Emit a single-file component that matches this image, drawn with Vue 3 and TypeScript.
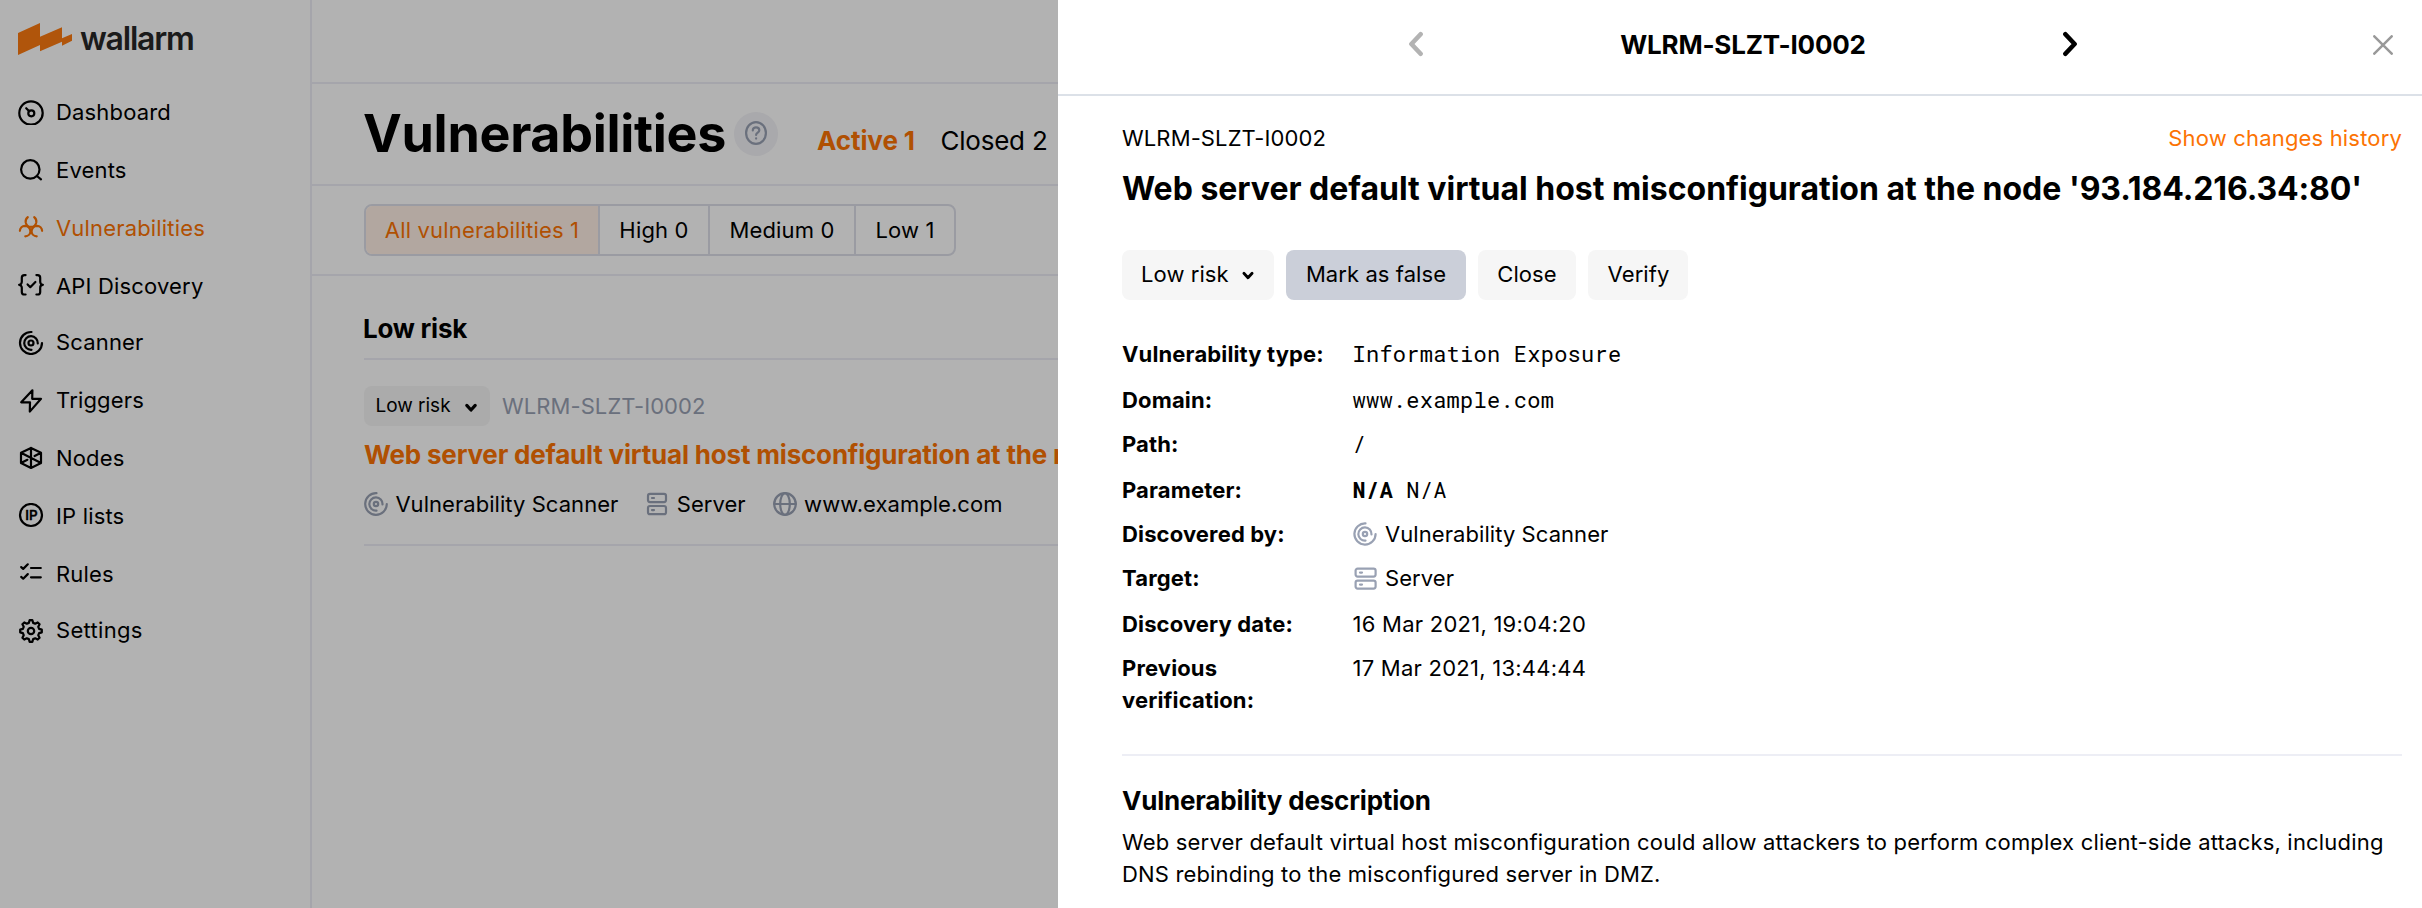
<script setup lang="ts">
interface NavItem {
  id: string
  label: string
  active?: boolean
}

interface Detail {
  label: string
  value: string
  kind: 'mono' | 'text' | 'param' | 'scanner' | 'server'
}

const nav: NavItem[] = [
  { id: 'dashboard', label: 'Dashboard' },
  { id: 'events', label: 'Events' },
  { id: 'vulnerabilities', label: 'Vulnerabilities', active: true },
  { id: 'api', label: 'API Discovery' },
  { id: 'scanner', label: 'Scanner' },
  { id: 'triggers', label: 'Triggers' },
  { id: 'nodes', label: 'Nodes' },
  { id: 'ip', label: 'IP lists' },
  { id: 'rules', label: 'Rules' },
  { id: 'settings', label: 'Settings' },
]

const filters = ['All vulnerabilities 1', 'High 0', 'Medium 0', 'Low 1']
const vulnId = 'WLRM-SLZT-I0002'
const vulnName = 'Web server default virtual host misconfiguration at the node'
const vulnHost = "'93.184.216.34:80'"

const details: Detail[] = [
  { label: 'Vulnerability type:', value: 'Information Exposure', kind: 'mono' },
  { label: 'Domain:', value: 'www.example.com', kind: 'mono' },
  { label: 'Path:', value: '/', kind: 'mono' },
  { label: 'Parameter:', value: 'N/A', kind: 'param' },
  { label: 'Discovered by:', value: 'Vulnerability Scanner', kind: 'scanner' },
  { label: 'Target:', value: 'Server', kind: 'server' },
  { label: 'Discovery date:', value: '16 Mar 2021, 19:04:20', kind: 'text' },
  { label: 'Previous verification:', value: '17 Mar 2021, 13:44:44', kind: 'text' },
]

// Outline of an eight-toothed gear centred on (cx, cy).
function gearPath(cx: number, cy: number): string {
  const pts: string[] = []
  for (let k = 0; k < 8; k++) {
    for (const [offset, radius] of [[-15, 8.4], [-7, 10.9], [7, 10.9], [15, 8.4]]) {
      const a = ((k * 45 + offset) * Math.PI) / 180
      pts.push(`${(cx + radius * Math.sin(a)).toFixed(2)} ${(cy - radius * Math.cos(a)).toFixed(2)}`)
    }
  }
  return `M${pts.join('L')}Z`
}
const gear = gearPath(13, 14)
</script>

<template>
  <div class="app">
    <aside class="sidebar">
      <div class="logo">
        <svg class="logo-mark" width="54" height="32" viewBox="0 0 54 32">
          <path d="M0 10L22 0V13.7L44 4.3V15.3L54 11V17.7L44 22.7V18.7L22 28.3V22L0 32Z" fill="#fc7a10" />
        </svg>
        <span class="logo-text">wallarm</span>
      </div>
      <nav class="nav">
        <a v-for="item in nav" :key="item.id" class="nav-item" :class="[item.id, { active: item.active }]">
          <svg class="nav-icon" width="26" height="26" viewBox="0 0 26 26">
            <template v-if="item.id === 'dashboard'">
              <circle cx="13" cy="14" r="11.7" />
              <circle cx="13.3" cy="14.3" r="3" />
              <path d="M8.2 9.2L11.2 12.2" />
            </template>
            <template v-else-if="item.id === 'events'">
              <circle cx="12.3" cy="12.4" r="9.2" />
              <path d="M18.9 19L23 22.4" />
            </template>
            <template v-else-if="item.id === 'vulnerabilities'">
              <path d="M9.8 2.1C7.9 3.7 7.4 5.4 7.7 7.4C8.2 10 10.4 11.9 13 11.9C15.6 11.9 17.8 10 18.3 7.4C18.6 5.4 18.1 3.7 16.2 2.1" />
              <path d="M1.9 15.8A5.3 5.3 0 0 1 7 10.8A5.4 5.4 0 0 1 12.4 16.2A5.2 5.2 0 0 1 7.3 21.3" />
              <path d="M24.1 15.8A5.3 5.3 0 0 0 19 10.8A5.4 5.4 0 0 0 13.6 16.2A5.2 5.2 0 0 0 18.7 21.3" />
            </template>
            <template v-else-if="item.id === 'api'">
              <path d="M7.6 2.1H6.4A2.6 2.6 0 0 0 3.8 4.7V8.8C3.8 10.6 2.6 11.8 1.1 11.8C2.6 11.8 3.8 13 3.8 14.8V18.9A2.6 2.6 0 0 0 6.4 21.5H7.6" />
              <path d="M18.4 2.1H19.6A2.6 2.6 0 0 1 22.2 4.7V8.8C22.2 10.6 23.4 11.8 24.9 11.8C23.4 11.8 22.2 13 22.2 14.8V18.9A2.6 2.6 0 0 1 19.6 21.5H18.4" />
              <path d="M9.6 11.4L12.3 14.2L17.4 9" />
            </template>
            <template v-else-if="item.id === 'scanner'">
              <path d="M13.5 3A11 11 0 1 0 24 14" />
              <path d="M19.8 14.5A6.8 6.8 0 1 0 13.5 20.8" />
              <circle cx="13" cy="14" r="2.5" />
            </template>
            <template v-else-if="item.id === 'triggers'">
              <path d="M14.4 3.3L3.2 15.3H12L11.8 24.6L23 11.8H14.2Z" />
            </template>
            <template v-else-if="item.id === 'nodes'">
              <path d="M13 2.9L23 7.8V18L13 22.9L3 18V7.8ZM13 2.9V22.9M3 7.8L23 18M23 7.8L16.6 11M9.4 14.8L3 18" />
            </template>
            <template v-else-if="item.id === 'ip'">
              <circle cx="13" cy="12" r="11" />
              <text class="ip-text" x="7.2" y="16.9">IP</text>
            </template>
            <template v-else-if="item.id === 'rules'">
              <path d="M3.2 6.1L5.2 7.9L9.8 3.3M3.2 15.9L5.2 17.7L9.8 13.1M13 7H22.8M13 16.3H22.8" />
            </template>
            <template v-else>
              <path :d="gear" />
              <circle cx="13" cy="14" r="3.2" />
            </template>
          </svg>
          <span>{{ item.label }}</span>
        </a>
      </nav>
    </aside>

    <main class="main">
      <div class="topbar"></div>
      <header class="title-bar">
        <h1 class="title">Vulnerabilities</h1>
        <span class="help">
          <svg width="22" height="24" viewBox="0 0 22 24">
            <ellipse cx="11" cy="12" rx="9.9" ry="10.9" />
            <path d="M7.8 9.4C7.8 7.4 9.2 6.3 11 6.3C12.9 6.3 14.3 7.5 14.3 9.2C14.3 11.6 11.1 11.6 11.1 14" />
            <path d="M11.1 17.3V17.6" />
          </svg>
        </span>
        <a class="state active">Active 1</a>
        <a class="state closed">Closed 2</a>
      </header>
      <div class="filter-bar">
        <div class="filters">
          <a v-for="(f, i) in filters" :key="f" class="filter" :class="['f' + i, { active: i === 0 }]">{{ f }}</a>
        </div>
      </div>
      <section class="list">
        <h2 class="group">Low risk</h2>
        <article class="vuln">
          <div class="vuln-head">
            <span class="risk">
              Low risk
              <svg width="14" height="12" viewBox="0 0 14 12"><path d="M2.8 3.4L7 8L11.2 3.4" /></svg>
            </span>
            <span class="vuln-id">{{ vulnId }}</span>
          </div>
          <div class="vuln-title">{{ vulnName }}</div>
          <div class="meta">
            <span class="meta-item">
              <svg class="meta-icon" width="24" height="24" viewBox="0 0 24 24">
                <path d="M12.5 1.2A10.8 10.8 0 1 0 22.8 12" />
                <path d="M18.5 12.5A6.6 6.6 0 1 0 12.5 18.6" />
                <circle cx="12" cy="12" r="2.2" />
              </svg>
              Vulnerability Scanner
            </span>
            <span class="meta-item">
              <svg class="meta-icon" width="24" height="24" viewBox="0 0 24 24">
                <rect x="3" y="1.9" width="18" height="8.2" rx="2" />
                <rect x="3" y="14" width="18" height="8.2" rx="2" />
                <path d="M7 6H9M7 18.1H9" />
              </svg>
              Server
            </span>
            <span class="meta-item">
              <svg class="meta-icon" width="24" height="24" viewBox="0 0 24 24">
                <circle cx="12" cy="12" r="10.8" />
                <ellipse cx="12" cy="12" rx="4.8" ry="10.8" />
                <path d="M1.2 12H22.8" />
              </svg>
              www.example.com
            </span>
          </div>
        </article>
      </section>
    </main>

    <div class="overlay"></div>

    <section class="panel">
      <header class="panel-head">
        <svg class="arrow prev" width="16" height="26" viewBox="0 0 16 26"><path d="M12.6 3.2L3.4 13L12.6 22.8" /></svg>
        <span class="panel-name">{{ vulnId }}</span>
        <svg class="arrow next" width="16" height="26" viewBox="0 0 16 26"><path d="M3.4 3.2L12.6 13L3.4 22.8" /></svg>
        <svg class="close" width="20" height="20" viewBox="0 0 20 20"><path d="M1.3 1.3L18.7 18.7M18.7 1.3L1.3 18.7" /></svg>
      </header>
      <div class="panel-body">
        <div class="id-row">
          <span class="panel-id">{{ vulnId }}</span>
          <a class="history">Show changes history</a>
        </div>
        <h2 class="panel-title">{{ vulnName }} <span class="host">{{ vulnHost }}</span></h2>
        <div class="actions">
          <button class="btn b-risk">
            Low risk
            <svg width="14" height="12" viewBox="0 0 14 12"><path d="M2.9 3.2L7 7.8L11.1 3.2" /></svg>
          </button>
          <button class="btn b-mark">Mark as false</button>
          <button class="btn b-close">Close</button>
          <button class="btn b-verify">Verify</button>
        </div>
        <dl class="details">
          <div v-for="d in details" :key="d.label" class="row">
            <dt class="label">{{ d.label }}</dt>
            <dd class="value" :class="d.kind">
              <b v-if="d.kind === 'param'">N/A&nbsp;</b>
              <svg v-if="d.kind === 'scanner'" class="meta-icon" width="24" height="24" viewBox="0 0 24 24">
                <path d="M12.5 1.4A10.6 10.6 0 1 0 22.6 12" />
                <path d="M18.5 12.5A6.6 6.6 0 1 0 12.5 18.6" />
                <circle cx="12" cy="12" r="2.2" />
              </svg>
              <svg v-if="d.kind === 'server'" class="meta-icon" width="24" height="24" viewBox="0 0 24 24">
                <rect x="2.6" y="2.6" width="20" height="8" rx="2" />
                <rect x="2.6" y="14.6" width="20" height="8" rx="2" />
                <path d="M7 6.6H9M7 18.6H9" />
              </svg>
              <span>{{ d.value }}</span>
            </dd>
          </div>
        </dl>
        <section class="description">
          <h3>Vulnerability description</h3>
          <p>
            <span class="l1">Web server default virtual host misconfiguration could allow attackers to perform complex client-side attacks, including</span>
            <br />
            <span class="l2">DNS rebinding to the misconfigured server in DMZ.</span>
          </p>
        </section>
      </div>
    </section>
  </div>
</template>

<style>
body {
  margin: 0;
}
</style>

<style scoped>
* {
  box-sizing: border-box;
}
.app {
  position: relative;
  display: flex;
  width: 2422px;
  height: 908px;
  overflow: hidden;
  background: #fff;
  color: #000;
  font-family: Inter, 'Liberation Sans', sans-serif;
  font-size: 22px;
  line-height: 26px;
  letter-spacing: 0.17px;
}
svg {
  flex: none;
  fill: none;
  stroke: currentColor;
  stroke-width: 2.2;
  stroke-linecap: round;
  stroke-linejoin: round;
}
h1,
h2,
h3,
p,
dl,
dd {
  margin: 0;
}

/* Sidebar */
.sidebar {
  flex: none;
  width: 312px;
  border-right: 2px solid #ecedf5;
  padding: 23px 0 0 18px;
}
.logo {
  display: flex;
  height: 32px;
}
.logo-mark {
  stroke: none;
}
.logo-text {
  margin: -4px 0 0 8px;
  font-size: 32px;
  font-weight: 600;
  line-height: 39px;
  letter-spacing: -1.2px;
  color: #272727;
}
.nav {
  display: flex;
  flex-direction: column;
  margin-top: 28px;
}
.nav-item {
  display: flex;
  align-items: center;
  gap: 12px;
  height: 58px;
}
.nav-item.active {
  color: #fc7303;
}
.nav-item.scanner,
.nav-item.settings {
  margin-top: -2px;
}
.nav-item.settings {
  letter-spacing: 0.3px;
}
.ip-text {
  fill: currentColor;
  stroke: currentColor;
  stroke-width: 0.3;
  font-size: 13.4px;
  font-weight: 600;
  letter-spacing: 0;
}

/* Main column */
.main {
  flex: none;
  width: 746px;
}
.topbar {
  height: 84px;
  border-bottom: 2px solid #ecedf5;
}
.title-bar {
  display: flex;
  align-items: flex-start;
  height: 102px;
  padding: 18px 0 0 51px;
  border-bottom: 2px solid #ecedf5;
}
.title {
  font-size: 52px;
  line-height: 63px;
  letter-spacing: -0.3px;
}
.help {
  display: flex;
  align-items: center;
  justify-content: center;
  width: 44px;
  height: 44px;
  margin: 10px 0 0 8px;
  padding-bottom: 2px;
  border-radius: 50%;
  background: #f2f2f6;
  color: #99a1b3;
}
.state {
  margin-top: 23px;
  font-size: 26px;
  line-height: 31px;
  white-space: nowrap;
}
.state.active {
  margin-left: 39px;
  font-weight: 700;
  letter-spacing: -0.1px;
  color: #fc7303;
}
.state.closed {
  margin-left: 25.5px;
  letter-spacing: -0.22px;
}
.filter-bar {
  height: 90px;
  padding: 18px 0 0 52px;
  border-bottom: 2px solid #ecedf5;
}
.filters {
  display: flex;
  width: 592px;
  height: 52px;
  overflow: hidden;
  border: 2px solid #dddfe9;
  border-radius: 8px;
}
.filter {
  flex: none;
  padding-top: 11px;
  border-right: 2px solid #dddfe9;
  text-align: center;
}
.f0 {
  width: 234px;
}
.f1 {
  width: 110px;
}
.f2 {
  width: 146px;
}
.f3 {
  width: 98px;
  border-right: 0;
}
.filter.active {
  background: #fff0e6;
  color: #fc7303;
}
.list {
  padding: 37px 0 0 52px;
}
.group {
  padding-bottom: 14px;
  border-bottom: 2px solid #ecedf5;
  font-size: 26px;
  line-height: 31px;
  letter-spacing: -0.25px;
  text-indent: -1px;
}
.vuln {
  padding: 26px 0 27px;
  border-bottom: 2px solid #ecedf5;
}
.vuln-head {
  display: flex;
}
.risk {
  display: flex;
  justify-content: space-between;
  width: 126px;
  height: 40px;
  padding: 8px 12px 0 11.5px;
  border-radius: 8px;
  background: #f5f5f5;
  font-size: 19px;
  line-height: 23px;
  letter-spacing: -0.02px;
}
.risk svg {
  margin-top: 8px;
  stroke-width: 3.2;
}
.vuln-id {
  margin: 7px 0 0 12px;
  letter-spacing: 0.08px;
  color: #99a1b3;
}
.vuln-title {
  margin-top: 13px;
  overflow: hidden;
  font-size: 26px;
  font-weight: 700;
  line-height: 31px;
  letter-spacing: -0.19px;
  white-space: nowrap;
  color: #fc7303;
}
.meta {
  display: flex;
  gap: 27px;
  margin-top: 21px;
  letter-spacing: 0.05px;
  white-space: nowrap;
}
.meta-item {
  display: flex;
  align-items: center;
  gap: 7.4px;
}
.meta-icon {
  color: #99a1b3;
}

.overlay {
  position: absolute;
  inset: 0;
  background: rgba(0, 0, 0, 0.3);
}

/* Details panel */
.panel {
  position: absolute;
  top: 0;
  right: 0;
  bottom: 0;
  width: 1364px;
  background: #fff;
}
.panel-head {
  display: flex;
  height: 96px;
  padding: 29px 29px 0 350px;
  border-bottom: 2px solid #dce1e8;
}
.arrow {
  margin-top: 2px;
  stroke-width: 4.6;
}
.prev {
  color: #b3b3b3;
}
.panel-name {
  width: 638px;
  font-size: 26px;
  font-weight: 700;
  line-height: 31px;
  letter-spacing: -0.21px;
  text-align: center;
}
.close {
  margin: 6px 0 0 auto;
  stroke-width: 2.5;
  color: #999;
}
.panel-body {
  padding: 29px 20px 0 64px;
}
.id-row {
  display: flex;
  justify-content: space-between;
}
.panel-id {
  letter-spacing: 0.12px;
}
.history {
  color: #fc7303;
}
.panel-title {
  margin-top: 18px;
  font-size: 32px;
  line-height: 39px;
  letter-spacing: -0.01px;
  white-space: nowrap;
}
.host {
  letter-spacing: -0.12px;
}
.actions {
  display: flex;
  gap: 12px;
  margin-top: 42px;
}
.btn {
  display: flex;
  justify-content: center;
  height: 50px;
  padding: 11px 0 0;
  border: 0;
  border-radius: 8px;
  background: #f6f6f6;
  color: #000;
  font: inherit;
  letter-spacing: 0.08px;
}
.b-risk {
  width: 152px;
  justify-content: flex-start;
  gap: 12px;
  padding-left: 19px;
}
.b-risk svg {
  margin-top: 9px;
  stroke-width: 2.8;
}
.b-mark {
  width: 180px;
  background: #cbcfd9;
}
.b-close {
  width: 98px;
}
.b-verify {
  width: 100px;
  padding-left: 1px;
}
.details {
  margin-top: 38px;
  line-height: 32px;
}
.row {
  display: grid;
  grid-template-columns: 215px 1fr;
  column-gap: 15.5px;
  align-items: baseline;
  height: 44px;
}
.row:nth-child(1),
.row:nth-child(3),
.row:nth-child(6) {
  height: 46px;
}
.row:last-child {
  height: 64px;
}
.label {
  font-weight: 700;
  letter-spacing: 0.14px;
}
.value {
  display: flex;
  align-items: baseline;
  letter-spacing: 0.25px;
}
.value.mono,
.value.param {
  font-family: 'Roboto Mono', 'Liberation Mono', monospace;
  letter-spacing: 0.24px;
}
.value.scanner,
.value.server {
  gap: 8.5px;
  letter-spacing: 0.07px;
}
.value .meta-icon {
  align-self: center;
}
.description {
  margin-top: 38px;
  padding-top: 29px;
  border-top: 2px solid #edeef5;
}
.description h3 {
  font-size: 26px;
  line-height: 31px;
  letter-spacing: -0.2px;
}
.description p {
  margin-top: 10px;
  line-height: 32px;
  white-space: nowrap;
}
.l1 {
  letter-spacing: 0.187px;
}
.l2 {
  letter-spacing: 0.165px;
}
</style>
